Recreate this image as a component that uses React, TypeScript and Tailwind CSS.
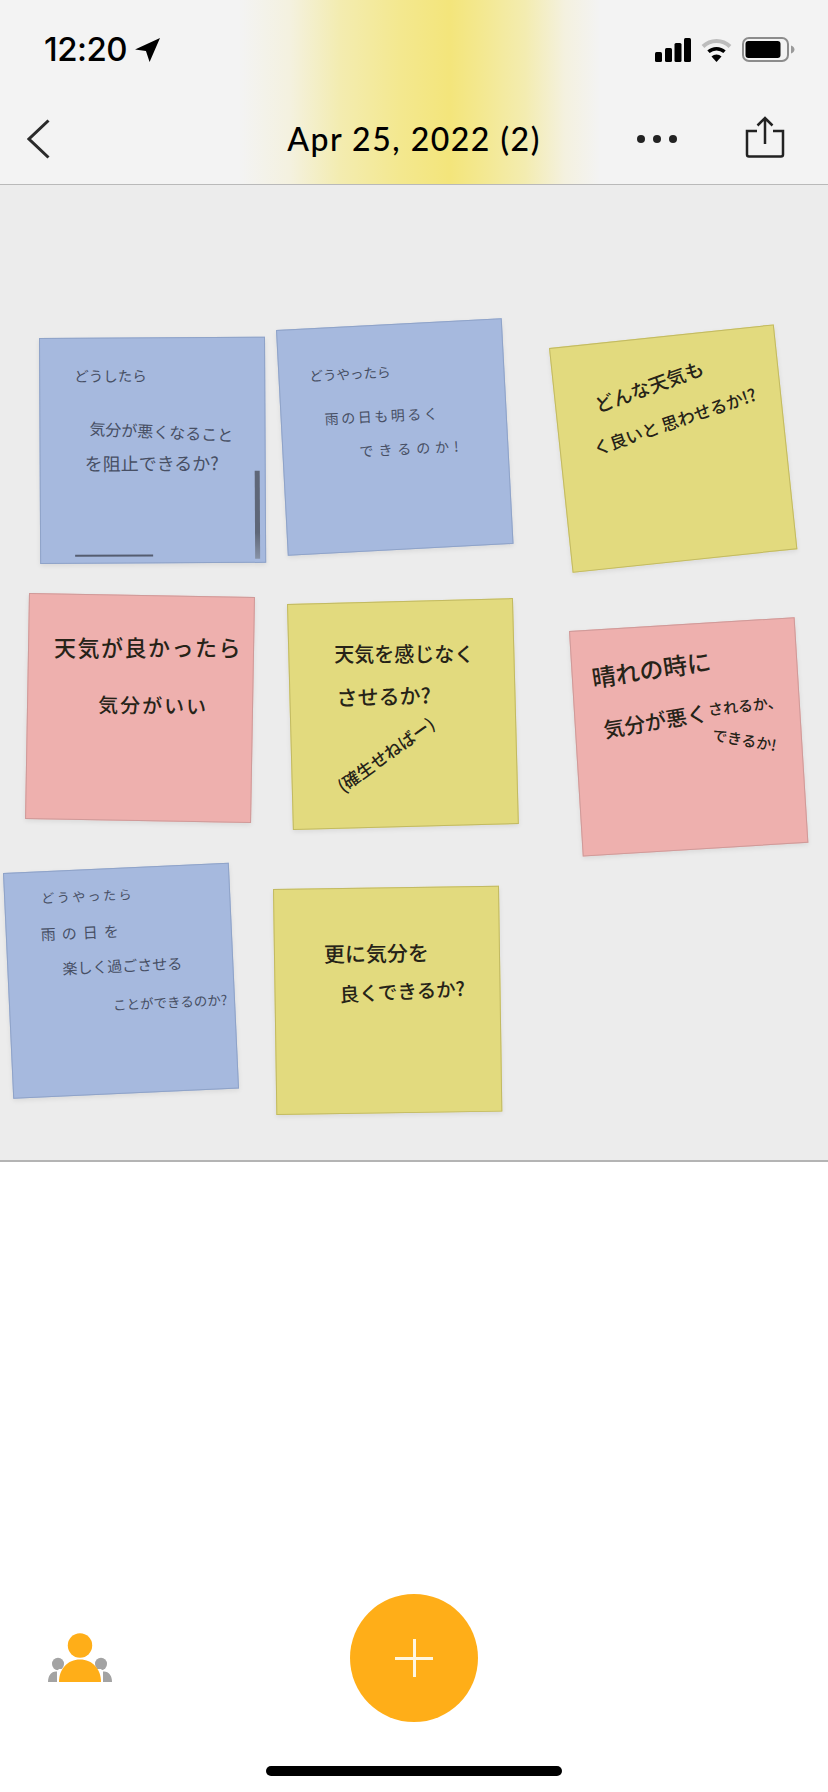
const inkBlue = "font-normal text-[#474f64]"
const inkDark = "font-medium text-[#262318]"

const noteBase =
  "absolute h-[226px] w-[226px] origin-top-left border shadow-[0_2px_5px_rgba(0,0,0,0.08)] font-['Noto_Sans_CJK_JP',sans-serif] leading-none"
const blue = "border-[#8fa3c8] bg-[#a6b9de]"
const yellow = "border-[#c2ba62] bg-[#e2da7e]"
const pink = "border-[#cf9a99] bg-[#eeb0ae]"

function Line({ className, children }: { className: string; children: string }) {
  return <p className={`w-max origin-left whitespace-nowrap ${className}`}>{children}</p>
}

function Notes() {
  return (
    <main className="relative h-[977px] overflow-hidden border-b-2 border-[#b4b4b4] bg-[#ececec]">
      {/* canvas is offset 185px from the page top */}
      <section className={`${noteBase} ${blue} ${inkBlue} left-[39px] top-[153px] rotate-[-0.3deg]`}>
        <Line className="ml-[34px] mt-[30px] text-[14.5px]">どうしたら</Line>
        <Line className="ml-[49px] mt-[36px] rotate-[3deg] text-[16px]">気分が悪くなること</Line>
        <Line className="ml-[44px] mt-[18px] text-[18px]">を阻止できるか?</Line>
        <span className="absolute bottom-[3px] right-[5px] h-[88px] w-[5px] bg-[linear-gradient(#5f6778,#5f6778_70%,#8792a6)]" />
        <span className="absolute bottom-[6px] left-[34px] h-[2px] w-[78px] bg-[#555d70]" />
      </section>

      <section className={`${noteBase} ${blue} ${inkBlue} left-[276px] top-[145px] rotate-[-3deg]`}>
        <Line className="ml-[30px] mt-[40px] text-[13.5px]">どうやったら</Line>
        <Line className="ml-[43px] mt-[29px] text-[14px] tracking-[2.5px]">雨の日も明るく</Line>
        <Line className="ml-[76px] mt-[20px] text-[14px] tracking-[5px]">できるのか!</Line>
      </section>

      <section className={`${noteBase} ${yellow} ${inkDark} left-[549px] top-[163px] rotate-[-6deg]`}>
        <Line className="ml-[39px] mt-[51px] rotate-[-14deg] text-[19px]">どんな天気も</Line>
        <Line className="ml-[33px] mt-[25px] rotate-[-13deg] text-[17px]">く良いと 思わせるか!?</Line>
      </section>

      <section className={`${noteBase} ${pink} ${inkDark} left-[29px] top-[408px] rotate-[1deg]`}>
        <Line className="ml-[25px] mt-[41px] rotate-[-1deg] text-[22px] tracking-[1.5px]">天気が良かったら</Line>
        <Line className="ml-[70px] mt-[36px] text-[20px] tracking-[2px]">気分がいい</Line>
      </section>

      <section className={`${noteBase} ${yellow} ${inkDark} left-[287px] top-[419px] rotate-[-1.5deg] bg-[#e0d674]`}>
        <Line className="ml-[45px] mt-[40px] rotate-[1.5deg] text-[20px]">天気を感じなく</Line>
        <Line className="ml-[46px] mt-[23px] text-[21px]">させるか?</Line>
        <Line className="ml-[46px] mt-[71px] rotate-[-34deg] text-[17px]">(確生せねばー)</Line>
      </section>

      <section className={`${noteBase} ${pink} ${inkDark} left-[569px] top-[446px] rotate-[-3.5deg] bg-[#ecb0b0]`}>
        <Line className="ml-[19px] mt-[35px] rotate-[-5deg] text-[24px]">晴れの時に</Line>
        <div className="ml-[28px] mt-[19px] flex">
          <Line className="mt-[11px] w-[113px] rotate-[-6deg] text-[21px]">気分が悪く</Line>
          <div>
            <Line className="rotate-[-3deg] text-[15px]">されるか、</Line>
            <Line className="ml-[3px] mt-[10px] rotate-[13deg] text-[15px]">できるか!</Line>
          </div>
        </div>
      </section>

      <section className={`${noteBase} ${blue} ${inkBlue} left-[3px] top-[688px] rotate-[-2.6deg] bg-[#a4bbe0]`}>
        <Line className="ml-[36px] mt-[19px] text-[13px] tracking-[2.5px]">どうやったら</Line>
        <Line className="ml-[34px] mt-[22px] text-[15px] tracking-[6px]">雨の日を</Line>
        <Line className="ml-[54px] mt-[20px] text-[15px]">楽しく過ごさせる</Line>
        <Line className="ml-[103px] mt-[25px] text-[13.5px]">ことができるのか?</Line>
      </section>

      <section className={`${noteBase} ${yellow} ${inkDark} left-[273px] top-[704px] rotate-[-0.85deg]`}>
        <Line className="ml-[49px] mt-[54px] text-[21px]">更に気分を</Line>
        <Line className="ml-[64px] mt-[20px] rotate-[-2deg] text-[19.5px]">良くできるか?</Line>
      </section>
    </main>
  )
}

function StatusIcons() {
  return (
    <div className="flex items-center gap-[10px]">
      <svg width="36" height="24" viewBox="0 0 36 24" fill="#000">
        <rect x="0" y="14" width="7" height="10" rx="1.5" />
        <rect x="10" y="10" width="7" height="14" rx="1.5" />
        <rect x="19.5" y="5" width="7" height="19" rx="1.5" />
        <rect x="29" y="0" width="7" height="24" rx="1.5" />
      </svg>
      <svg width="31" height="24" viewBox="0 0 31 24" fill="none">
        <path d="M2 8.5C9.5 1.2 21.5 1.2 29 8.5" stroke="#bdbdbd" strokeWidth="4" />
        <path d="M7.5 13.8C12 9.6 19 9.6 23.5 13.8" stroke="#000" strokeWidth="3.5" />
        <path d="M15.5 24L10.5 18.5C13.2 15.8 17.8 15.8 20.5 18.5Z" fill="#000" />
      </svg>
      <svg width="53" height="25" viewBox="0 0 53 25" fill="none">
        <rect x="1" y="1" width="45" height="23" rx="6" stroke="#8c8c8c" strokeWidth="2" />
        <rect x="3.5" y="4" width="35" height="17" rx="3" fill="#000" />
        <path d="M49 8.5C51.5 9.5 52.5 11 52.5 12.5C52.5 14 51.5 15.5 49 16.5Z" fill="#9a9a9a" />
      </svg>
    </div>
  )
}

function PeopleIcon() {
  return (
    <svg width="64" height="49" viewBox="0 0 64 49">
      <ellipse cx="10" cy="31" rx="6" ry="6.2" fill="#a3a3a3" />
      <ellipse cx="53" cy="31" rx="6" ry="6.2" fill="#a3a3a3" />
      <path d="M0 49C0 43 3 38.5 8 38.5H56C61 38.5 64 43 64 49Z" fill="#a3a3a3" />
      <path d="M9 38L11 36L53 36L55 38L55 49L9 49Z" fill="#fff" />
      <circle cx="32" cy="12.5" r="12.2" fill="#ffae18" />
      <path d="M11 49C11 36 19.5 26.5 32 26.5C44.5 26.5 53 36 53 49Z" fill="#ffae18" />
    </svg>
  )
}

export default function App() {
  return (
    <div className="flex h-[1792px] w-[828px] flex-col overflow-hidden bg-white text-black">
      <header className="h-[185px] border-b border-[#b9b9b9] bg-[linear-gradient(90deg,#f3f3f3_240px,#f4f1df_290px,#f3ecb0_340px,#f3e88f_400px,#f3e57b_450px,#f3e88f_480px,#f3ecb0_525px,#f4f1df_565px,#f3f3f3_600px)]">
        <div className="flex h-[99px] items-center justify-between pl-[44px] pr-[33px]">
          <div className="flex items-center gap-[8px]">
            <span className="font-['Inter',sans-serif] text-[33px] font-medium leading-none tracking-[-0.5px]">12:20</span>
            <svg width="25" height="25" viewBox="0 0 24 24" fill="#000">
              <path d="M24 1L14 24L10.5 13.5L0 12Z" />
            </svg>
          </div>
          <StatusIcons />
        </div>
        <nav className="grid h-[80px] grid-cols-[1fr_auto_1fr] items-center">
          <div className="pl-[27px]">
            <svg width="23" height="40" viewBox="0 0 23 40" fill="none" className="block">
              <path d="M21.5 1.5L2 20L21.5 38.5" stroke="#2a2a2a" strokeWidth="3" />
            </svg>
          </div>
          <h1 className="font-['Lato',sans-serif] text-[32px] font-medium leading-none tracking-[1.5px]">Apr 25, 2022 (2)</h1>
          <div className="flex items-center justify-end gap-[68px] pr-[43px]">
            <div className="flex gap-[8px]">
              <span className="h-[8px] w-[8px] rounded-full bg-[#222]" />
              <span className="h-[8px] w-[8px] rounded-full bg-[#222]" />
              <span className="h-[8px] w-[8px] rounded-full bg-[#222]" />
            </div>
            <svg width="40" height="42" viewBox="0 0 40 42" fill="none" stroke="#222" strokeWidth="2.5" className="mb-[4px] block">
              <path d="M12 15H2V38.5C2 39.6 2.9 40.5 4 40.5H36C37.1 40.5 38 39.6 38 38.5V15H28" />
              <path d="M20 28V2M12.5 9.5L20 2L27.5 9.5" />
            </svg>
          </div>
        </nav>
      </header>

      <Notes />

      <div className="flex flex-1 flex-col bg-white pt-[432px]">
        <div className="relative flex justify-center">
          <div className="absolute left-[48px] top-[39px]">
            <PeopleIcon />
          </div>
          <button type="button" className="relative h-[128px] w-[128px] rounded-full bg-[#ffae18]">
            <span className="absolute left-[45px] top-[63px] h-[3px] w-[38px] bg-[#fff6e0]" />
            <span className="absolute left-[63px] top-[45px] h-[38px] w-[3px] bg-[#fff6e0]" />
          </button>
        </div>
        <div className="mx-auto mt-[44px] h-[10px] w-[296px] rounded-full bg-black" />
      </div>
    </div>
  )
}
